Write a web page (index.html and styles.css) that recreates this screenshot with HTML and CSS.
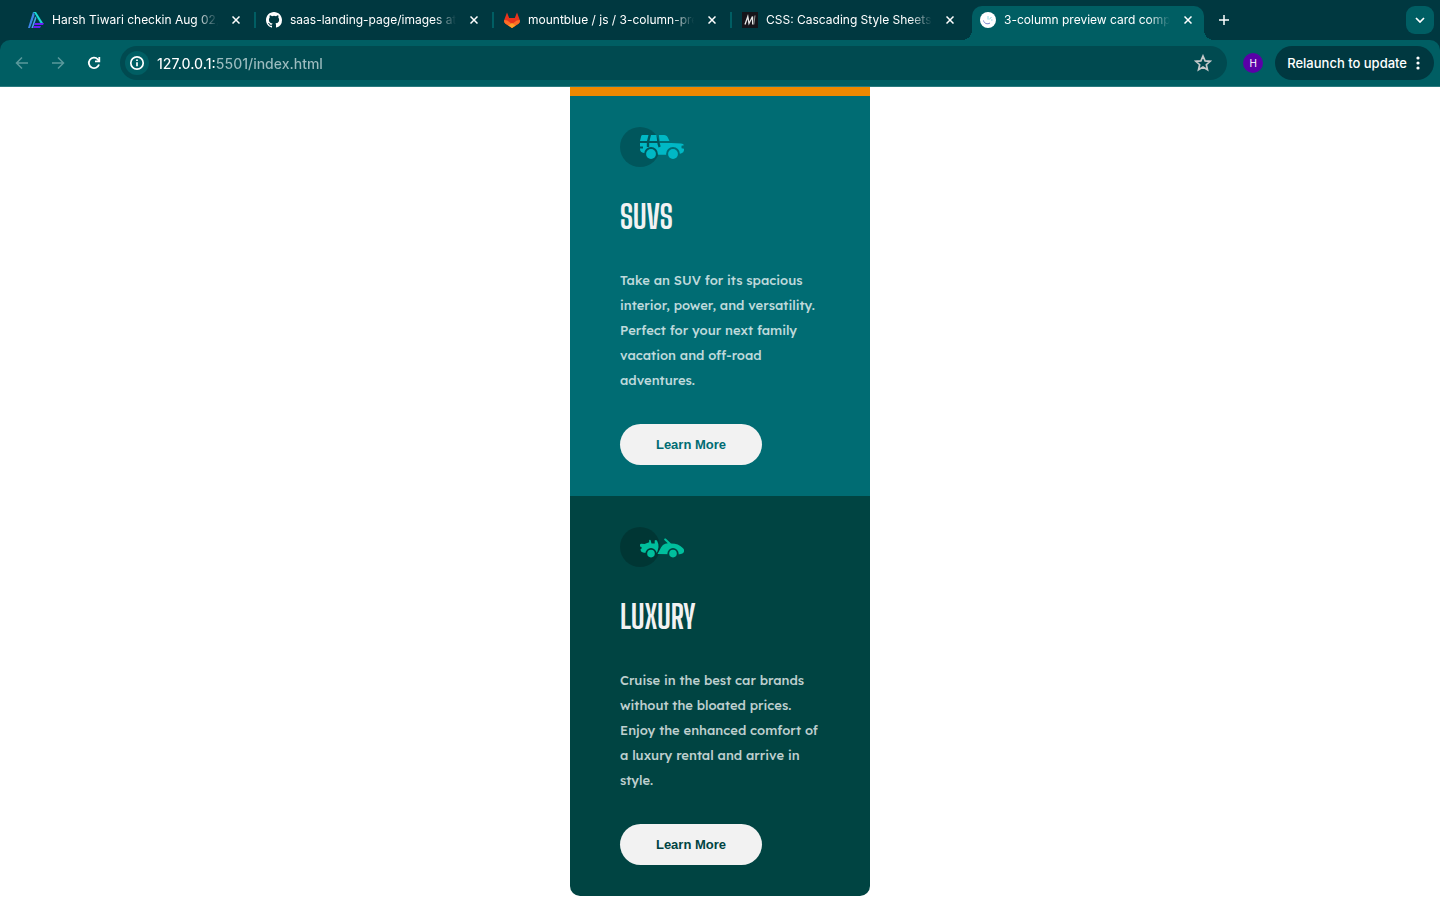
FILE: index.html
```html
<!DOCTYPE html>
<html lang="en">
<head>
<meta charset="utf-8">
<title>3-column preview card component</title>
<link rel="stylesheet" href="styles.css">
</head>
<body>
<header class="browser">
  <div class="tab-strip">
    <div class="tabs">
      <div class="tab">
        <svg class="favicon" viewBox="0 0 16 16"><path d="M5 0h3l7 11h-3z" fill="#19d8d4"/><path d="M5 0l2 2L2 16H0z" fill="#3f86e8"/><path d="M7 4l1.500 2L5 16H3z" fill="#4aa3f0"/><path d="M7 11h9l-1 2H6zM6 14h7l-1 2H5z" fill="#6a1cf5"/><path d="M6 1l6 10M3 16L7.500 3" stroke="#003840" stroke-width=".7"/></svg>
        <span class="tab-title">Harsh Tiwari checkin Aug 02,</span>
        <button class="tab-close" aria-label="Close tab"><svg viewBox="0 0 8 8"><path d="M.5.5l7 7M7.500.5l-7 7"/></svg></button>
      </div>
      <div class="tab">
        <svg class="favicon" viewBox="0 0 16 16"><path fill="#fff" d="M8 0C3.580 0 0 3.580 0 8c0 3.540 2.290 6.530 5.470 7.590.4.070.55-.17.55-.38 0-.19-.01-.82-.01-1.490-2.010.37-2.530-.49-2.690-.94-.09-.23-.48-.94-.82-1.130-.28-.15-.68-.52-.01-.53.63-.01 1.080.58 1.230.82.72 1.210 1.870.87 2.330.66.070-.52.28-.87.51-1.070-1.780-.2-3.640-.89-3.640-3.950 0-.87.31-1.590.82-2.150-.08-.2-.36-1.020.08-2.120 0 0 .67-.21 2.200.82a7.600 7.600 0 0 1 4 0c1.530-1.040 2.200-.82 2.200-.82.44 1.100.16 1.920.08 2.120.51.56.82 1.270.82 2.150 0 3.070-1.870 3.750-3.650 3.950.29.25.54.73.54 1.480 0 1.070-.01 1.930-.01 2.200 0 .21.15.46.55.38A8 8 0 0 0 16 8c0-4.420-3.580-8-8-8z"/></svg>
        <span class="tab-title">saas-landing-page/images at</span>
        <button class="tab-close" aria-label="Close tab"><svg viewBox="0 0 8 8"><path d="M.5.5l7 7M7.500.5l-7 7"/></svg></button>
      </div>
      <div class="tab">
        <svg class="favicon" viewBox="0 0 16 16"><path fill="#e8331c" d="M3 .5L5.200 6h5.600L13 .5 15.800 8c.4 1.400 0 2.600-1 3.500L8 16l-6.800-4.500C.2 10.600-.2 9.400.2 8z"/><path fill="#fc6d26" d="M.3 8l3 .6L8 12l4.700-3.400 3-.6c.4 1.400.1 2.600-.9 3.500L8 16l-6.800-4.500C.2 10.600-.1 9.400.3 8z"/><path fill="#fca326" d="M8 11l3.500 2.600L8 16l-3.500-2.400z"/></svg>
        <span class="tab-title">mountblue / js / 3-column-pre</span>
        <button class="tab-close" aria-label="Close tab"><svg viewBox="0 0 8 8"><path d="M.5.5l7 7M7.500.5l-7 7"/></svg></button>
      </div>
      <div class="tab">
        <svg class="favicon" viewBox="0 0 16 16"><path fill="#15141a" d="M0 0h16v16H0z"/><path d="M3 12.500L5.800 4.500l1.200 7 3.500-7 .2 8" fill="none" stroke="#e8e8e8" stroke-width="1.300"/><path d="M13 3.500l-1.200 9" stroke="#999" stroke-width="1"/></svg>
        <span class="tab-title">CSS: Cascading Style Sheets</span>
        <button class="tab-close" aria-label="Close tab"><svg viewBox="0 0 8 8"><path d="M.5.5l7 7M7.500.5l-7 7"/></svg></button>
      </div>
      <div class="tab tab-active">
        <svg class="favicon" viewBox="0 0 16 16"><circle cx="8" cy="8" r="8" fill="#fff"/><path d="M3.500 8.500c.5 3 4 4.200 6.500 2.500" fill="none" stroke="#7f88cc" stroke-width="1"/><path d="M8 4v3.500M9.200 7.500l2.300-2.500M11 8h1.500" fill="none" stroke="#8fd8e2" stroke-width="1"/></svg>
        <span class="tab-title">3-column preview card compo</span>
        <button class="tab-close" aria-label="Close tab"><svg viewBox="0 0 8 8"><path d="M.5.5l7 7M7.500.5l-7 7"/></svg></button>
      </div>
      <button class="new-tab" aria-label="New tab"><svg viewBox="0 0 10 10"><path d="M5 0v10M0 5h10"/></svg></button>
    </div>
    <button class="tab-search" aria-label="Search tabs"><svg viewBox="0 0 10 6"><path d="M1 1l4 4 4-4"/></svg></button>
  </div>
  <div class="toolbar">
    <div class="nav">
      <button class="nav-button nav-off" aria-label="Back"><svg viewBox="0 0 16 16"><path d="M14 8H3M8 2.500L2.500 8 8 13.500"/></svg></button>
      <button class="nav-button nav-off" aria-label="Forward"><svg viewBox="0 0 16 16"><path d="M2 8h11M8 2.500L13.500 8 8 13.500"/></svg></button>
      <button class="nav-button" aria-label="Reload"><svg viewBox="0 0 16 16"><path d="M13 9.500A5.200 5.200 0 1 1 11.800 4.300L13.300 6"/><path d="M13.300 2v4.300H9"/></svg></button>
    </div>
    <div class="omnibox">
      <button class="site-info" aria-label="Site information"><svg viewBox="0 0 16 16"><circle cx="8" cy="8" r="6.200"/><path d="M8 7.200v4M8 4.500v1.500"/></svg></button>
      <input class="address" type="text" value="127.0.0.1:5501/index.html" aria-label="Address">
      <button class="bookmark" aria-label="Bookmark this tab"><svg viewBox="0 0 16 16"><path d="M8 1.800l1.850 4.300 4.550.4-3.450 3 1.050 4.450L8 11.600l-4 2.350 1.050-4.450-3.450-3 4.550-.4z"/></svg></button>
    </div>
    <button class="avatar" aria-label="Profile">H</button>
    <button class="relaunch">Relaunch to update <svg viewBox="0 0 4 14"><circle cx="2" cy="2" r="1.600"/><circle cx="2" cy="7" r="1.600"/><circle cx="2" cy="12" r="1.600"/></svg></button>
  </div>
</header>
<main class="page">
  <div class="cards">
    <div class="sedans-edge"></div>
    <section class="card card-suvs">
      <svg class="card-icon" viewBox="0 0 64 40">
        <mask id="suv-cut"><path fill="#fff" d="M0 0h64v40H0z"/><circle cx="31" cy="27" r="6.900"/><circle cx="53" cy="27" r="6.900"/><path d="M30 7l-2 8v5M37.500 7l1.200 10 1 3" fill="none" stroke="#000" stroke-width="2.400"/></mask>
        <circle cx="20" cy="20" r="20" opacity=".2"/>
        <g fill="#00b8c5">
          <path mask="url(#suv-cut)" d="M22.500 8H44c2 0 3.200 1.200 3.800 2.500L49.500 14H20l1.200-5Q21.500 8 22.500 8zM20 16h31l10 .5q2.500.2 3 1.800l-2.500.5v2.400l2.500.6v1.400q0 2.300-3 3.300l-2 .6-13 .6h-7L24 26q-4-.5-4-4v-.5h3v-2h-3z"/>
          <circle cx="31" cy="27" r="4.900"/><circle cx="53" cy="27" r="4.900"/>
        </g>
      </svg>
      <h2 class="card-title">SUVS</h2>
      <p class="card-text">Take an SUV for its spacious interior, power, and versatility. Perfect for your next family vacation and off-road adventures.</p>
      <button class="card-button">Learn More</button>
    </section>
    <section class="card card-luxury">
      <svg class="card-icon" viewBox="0 0 64 40">
        <mask id="luxury-cut"><path fill="#fff" d="M0 0h64v40H0z"/><circle cx="31" cy="26.600" r="5.600"/><circle cx="53" cy="26.600" r="5.600"/></mask>
        <circle cx="20" cy="20" r="20" opacity=".2"/>
        <g fill="#00bf9d">
          <g mask="url(#luxury-cut)">
            <path d="M20 18q0-1.300 1.500-1.200l3 .2 4.700-1.700-.1-1.500q.2-1.300 1.400-.8l1 3.500h3.200v-3q1.300-1 2.400.2 1.600 2.800 1.400 6.500l-1.200 4.500-1.300 1.500L24 25.800q-3.500-.5-3.500-3.500l1.200-.7-.2-1.600-1.500-.5z"/>
            <path d="M37.500 27l3.800-7q1.300-2.500 4-3.300l2.500-.5-3.500-3.300q-.6-1.700 1.400-1.300l5.300 4.800q7.500-.1 11.500 4.300 2.300 2 1.300 4.300-.8 2-4.500 2.200H53z"/>
          </g>
          <circle cx="31" cy="26.600" r="3.800"/><circle cx="53" cy="26.600" r="3.800"/>
        </g>
      </svg>
      <h2 class="card-title">LUXURY</h2>
      <p class="card-text">Cruise in the best car brands without the bloated prices. Enjoy the enhanced comfort of a luxury rental and arrive in style.</p>
      <button class="card-button">Learn More</button>
    </section>
  </div>
</main>
</body>
</html>
```

FILE: styles.css
```css
:root {
  --frame: #003840;
  --toolbar: #005e63;
  --field: #004a50;
  --suvs: #006c73;
  --luxury: #004442;
}

* {
  box-sizing: border-box;
}

body {
  margin: 0;
  background: #fff;
  font-family: Inter, Roboto, sans-serif;
}

button,
input {
  margin: 0;
  padding: 0;
  border: 0;
  background: none;
  color: inherit;
  font: inherit;
}

button {
  cursor: pointer;
}

svg {
  display: block;
  flex: none;
}

.browser {
  background: var(--frame);
  color: #fff;
}

.browser button {
  display: flex;
  align-items: center;
  justify-content: center;
  flex: none;
}

.browser button svg {
  fill: none;
  stroke: currentColor;
}

.tab-strip {
  display: flex;
  align-items: center;
  height: 40px;
  padding: 0 6px 0 20px;
}

.tabs {
  display: flex;
  flex: 1;
  min-width: 0;
  align-self: stretch;
  gap: 6px;
}

.tab {
  position: relative;
  display: flex;
  align-items: center;
  flex: 0 1 232px;
  min-width: 0;
  height: 34px;
  margin-top: 6px;
  padding: 0 4px 6px 8px;
}

.tab:not(.tab-active)::after {
  content: "";
  position: absolute;
  top: 6px;
  right: -4px;
  width: 2px;
  height: 16px;
  background: var(--toolbar);
}

.tab:nth-child(4)::after {
  display: none;
}

.tab-active {
  background: var(--toolbar);
  border-radius: 10px 10px 0 0;
}

.tab-active::before,
.tab-active::after {
  content: "";
  position: absolute;
  bottom: 0;
  width: 10px;
  height: 10px;
}

.tab-active::before {
  left: -10px;
  background: radial-gradient(circle at 0 0, transparent 10px, var(--toolbar) 10px);
}

.tab-active::after {
  right: -10px;
  background: radial-gradient(circle at 100% 0, transparent 10px, var(--toolbar) 10px);
}

.favicon {
  width: 16px;
  height: 16px;
  margin-right: 8px;
}

.tab-title {
  flex: 1;
  min-width: 0;
  overflow: hidden;
  white-space: nowrap;
  font-size: 12px;
  line-height: 16px;
  -webkit-mask-image: linear-gradient(to left, transparent 6px, #000 28px);
  mask-image: linear-gradient(to left, transparent 6px, #000 28px);
}

.tab-close {
  width: 24px;
  height: 16px;
}

.tab-close svg {
  width: 8px;
  height: 8px;
  stroke-width: 1.5;
}

.new-tab {
  width: 28px;
  height: 40px;
}

.new-tab svg {
  width: 10px;
  height: 10px;
  stroke-width: 1.5;
}

.tab-search {
  width: 28px;
  height: 28px;
  border-radius: 9px;
  background: var(--toolbar);
}

.tab-search svg {
  width: 10px;
  height: 6px;
  stroke-width: 1.7;
}

.toolbar {
  display: flex;
  align-items: center;
  height: 47px;
  padding: 0 6px 0 8px;
  border-bottom: 1px solid #2a7a7e;
  border-radius: 10px 10px 0 0;
  background: var(--toolbar);
}

.nav {
  display: flex;
  gap: 8px;
  margin-right: 12px;
}

.nav-button {
  width: 28px;
  height: 34px;
}

.nav-button svg {
  width: 16px;
  height: 16px;
  stroke-width: 1.8;
}

.browser .nav-off svg {
  stroke-width: 1.5;
}

.nav-off {
  color: #5a999c;
}

.omnibox {
  display: flex;
  align-items: center;
  flex: 1;
  min-width: 0;
  height: 34px;
  padding: 0 12px 0 5px;
  border-radius: 17px;
  background: var(--field);
}

.site-info {
  width: 24px;
  height: 24px;
  margin-right: 8px;
  border-radius: 50%;
  background: var(--toolbar);
}

.site-info svg {
  width: 16px;
  height: 16px;
  stroke-width: 1.7;
}

.address {
  flex: 1;
  min-width: 0;
  height: 24px;
  font-size: 14px;
  font-weight: 500;
  background: linear-gradient(to right, #fff 60px, #9cbcbf 60px) text;
  -webkit-text-fill-color: transparent;
  outline: 0;
}

.bookmark {
  width: 24px;
  height: 24px;
  color: #c4c9ca;
}

.bookmark svg {
  width: 18px;
  height: 18px;
  stroke-width: 1.5;
}

.avatar {
  width: 20px;
  height: 20px;
  margin: 0 12px 0 16px;
  border-radius: 50%;
  background: #5a00a8;
  font-size: 10px;
}

.relaunch {
  gap: 9px;
  height: 34px;
  padding: 0 14px 0 12px;
  border-radius: 17px;
  background: var(--frame);
  font-size: 13px;
  font-weight: 500;
}

.browser .relaunch svg {
  width: 4px;
  height: 14px;
  fill: #fff;
  stroke: none;
}

.cards {
  width: 300px;
  max-width: 100%;
  margin: 0 auto;
  overflow: hidden;
  border-radius: 0 0 10px 10px;
}

.sedans-edge {
  height: 9px;
  background: #ee8800;
}

.card {
  display: flex;
  flex-direction: column;
  align-items: flex-start;
  gap: 31px;
  padding: 31px 50px;
}

.card-suvs {
  background: var(--suvs);
  color: var(--suvs);
}

.card-luxury {
  background: var(--luxury);
  color: var(--luxury);
}

.card-icon {
  width: 64px;
  height: 40px;
}

.card-title {
  margin: 0;
  color: #f2f2f2;
  font-family: "Big Shoulders Display", "Liberation Sans Narrow", "Roboto Condensed", Roboto, sans-serif;
  font-size: 32px;
  line-height: 39px;
  font-weight: 700;
}

.card-text {
  margin: 0;
  color: rgba(255, 255, 255, 0.75);
  font-family: "Lexend Deca", Inter, sans-serif;
  font-size: 13px;
  line-height: 25px;
  font-weight: 500;
}

.card-button {
  width: 142px;
  height: 41px;
  border-radius: 21px;
  background: #f2f2f2;
  font-family: "Liberation Sans", Arial, sans-serif;
  font-size: 13px;
  font-weight: 700;
}
```
